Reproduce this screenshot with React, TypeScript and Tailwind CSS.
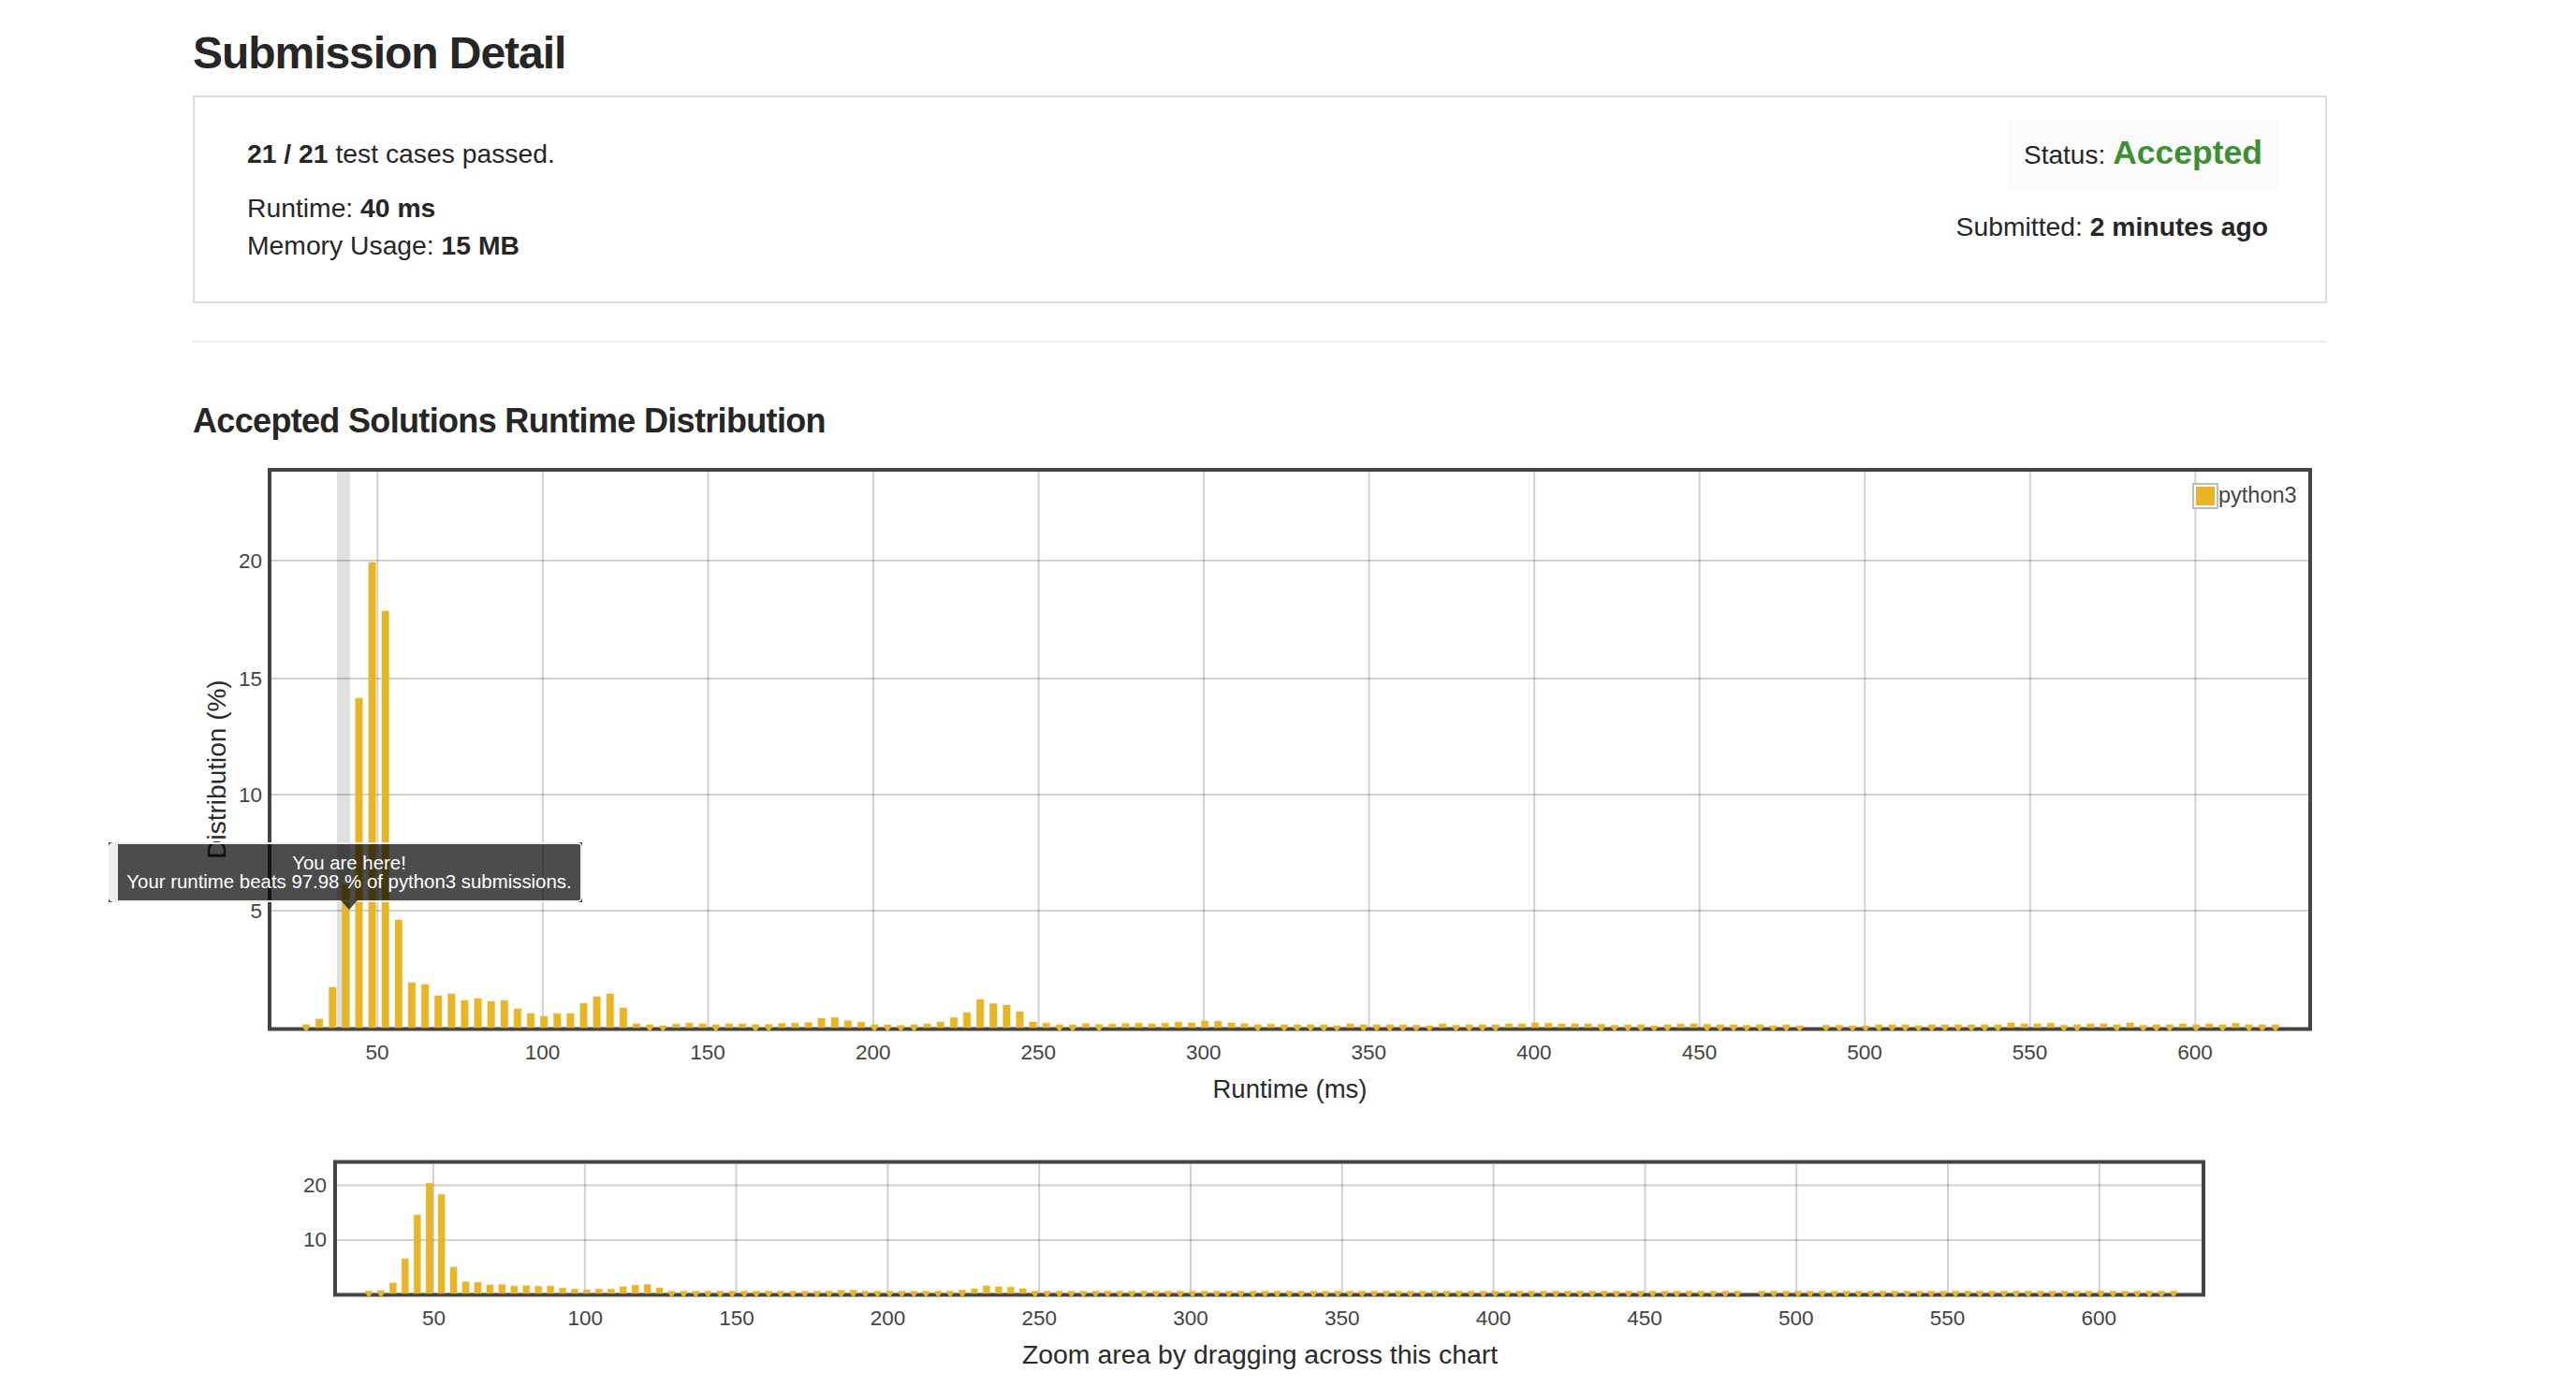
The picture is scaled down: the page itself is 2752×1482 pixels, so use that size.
import React from "react";

// bar heights in px on the big chart, one per 4ms bucket (0 = empty bucket)
const bars = [
  3, 9, 43, 153, 352, 497, 445, 115, 48, 46, 34, 36, 29, 31, 28, 29, 20, 15, 12, 15, 15, 26, 33, 36, 21, 4, 3, 2,
  3.7, 4.7, 4, 3, 4, 4, 3.3, 3.3, 4.3, 4.7, 5.3, 10, 10.7, 7.3, 5.7, 3, 3, 2.3, 3, 4, 6, 10.7, 16, 30, 25.7, 24, 17, 6,
  4.7, 3, 3, 4.3, 3.3, 3.7, 4.3, 4.7, 4, 4.7, 5.7, 5, 7, 6.7, 5, 4.3, 3, 3.7, 3, 3,
  3, 3, 2, 4, 3, 3, 3, 3, 2.5, 2, 4, 2.5, 3, 3, 3, 4, 4, 5, 4.7, 4, 4, 4, 3.5, 2.5, 3, 3, 2, 3, 3.7, 4, 3.5, 3, 3, 2.5,
  3, 2, 3, 2, 0, 2.5, 2.5, 2, 2, 3, 3, 3, 2, 3, 3, 3, 3, 3, 3, 5, 4, 4, 4.7, 2.5, 3, 4, 4, 3, 5, 2.5, 3, 3, 4, 3, 4, 3,
  4.7, 3, 3, 3,
];

const xTicks = [50, 100, 150, 200, 250, 300, 350, 400, 450, 500, 550, 600];
const gold = "#e7b526";

function Bar({ x, base, h, w }: { x: number; base: number; h: number; w: number }) {
  if (h <= 0) return null;
  return (
    <g>
      <rect
        x={x - w / 2}
        y={base - h}
        width={w}
        height={h}
        fill={gold}
        stroke="#e7b526"
        strokeOpacity={0.35}
        strokeWidth={1.5}
      />
      {h < 3.6 && (
        <polygon
          points={`${x - 3},${base} ${x + 3},${base} ${x + 1.5},${base + 3} ${x - 1.5},${base + 3}`}
          fill={gold}
        />
      )}
    </g>
  );
}

function MainChart() {
  const yTicks = [
    { v: 20, y: 599 },
    { v: 15, y: 725 },
    { v: 10, y: 849 },
    { v: 5, y: 973 },
  ];
  return (
    <svg viewBox="206 490 2280 700" className="block w-[2280px] h-[700px]">
      <rect x={360} y={504} width={14} height={594} fill="#e0e0e0" />
      {xTicks.map((t, i) => (
        <line key={t} x1={403.3 + i * 176.55} x2={403.3 + i * 176.55} y1={504} y2={1098} stroke="#000" strokeOpacity={0.18} strokeWidth={2} />
      ))}
      {yTicks.map((t) => (
        <line key={t.v} x1={290} x2={2466} y1={t.y} y2={t.y} stroke="#000" strokeOpacity={0.18} strokeWidth={2} />
      ))}
      <rect x={288} y={502} width={2180} height={597.5} fill="none" stroke="#444" strokeWidth={4} />
      {bars.map((h, i) => (
        <Bar key={i} x={327 + i * 14.12} base={1098} h={h} w={7.5} />
      ))}
      {yTicks.map((t) => (
        <text key={t.v} x={280} y={t.y + 8} textAnchor="end" className="text-[22.5px] fill-[#444]">
          {t.v}
        </text>
      ))}
      {xTicks.map((t, i) => (
        <text key={t} x={403 + i * 176.55} y={1132} textAnchor="middle" className="text-[22.5px] fill-[#444]">
          {t}
        </text>
      ))}
      <text x={1378} y={1173} textAnchor="middle" className="text-[27.5px] fill-[#2a2a2a]">
        Runtime (ms)
      </text>
      <text transform="translate(241 822) rotate(-90)" textAnchor="middle" className="text-[28px] fill-[#2a2a2a]">
        Distribution (%)
      </text>
      {/* legend */}
      <rect x={2343} y={517} width={26} height={26} fill="#fff" stroke="#bbb" strokeWidth={2} />
      <rect x={2346} y={520} width={20} height={20} fill={gold} />
      <text x={2370} y={537} className="text-[23.5px] fill-[#444]">
        python3
      </text>
    </svg>
  );
}

function MiniChart() {
  return (
    <svg viewBox="206 1230 2280 240" className="block w-[2280px] h-[240px] mt-[40px]">
      {xTicks.map((t, i) => (
        <line key={t} x1={463 + i * 161.8} x2={463 + i * 161.8} y1={1244} y2={1382} stroke="#000" strokeOpacity={0.18} strokeWidth={2} />
      ))}
      {[1266.5, 1325].map((y) => (
        <line key={y} x1={360} x2={2352} y1={y} y2={y} stroke="#000" strokeOpacity={0.18} strokeWidth={2} />
      ))}
      <rect x={358} y={1241.5} width={1996} height={142} fill="none" stroke="#444" strokeWidth={4} />
      {bars.map((h, i) => (
        <Bar key={i} x={394 + i * 12.94} base={1382} h={h > 0 ? Math.max(2.4, h * 0.235 + (h > 8 ? 1 : 0)) : 0} w={7} />
      ))}
      <text x={349} y={1274} textAnchor="end" className="text-[22.5px] fill-[#444]">
        20
      </text>
      <text x={349} y={1332} textAnchor="end" className="text-[22.5px] fill-[#444]">
        10
      </text>
      {xTicks.map((t, i) => (
        <text key={t} x={463.5 + i * 161.7} y={1416} textAnchor="middle" className="text-[22.5px] fill-[#444]">
          {t}
        </text>
      ))}
      <text x={1346} y={1456.5} textAnchor="middle" className="text-[28.4px] fill-[#2a2a2a]">
        Zoom area by dragging across this chart
      </text>
    </svg>
  );
}

function Tooltip() {
  return (
    <div className="absolute left-[-90px] top-[410px] w-[506px] h-[64px]">
      <div className="absolute left-0 top-0 w-[4px] h-[4px] bg-[#444]" />
      <div className="absolute right-0 top-0 w-[4px] h-[4px] bg-[#444]" />
      <div className="absolute left-0 bottom-0 w-[4px] h-[4px] bg-[#444]" />
      <div className="absolute right-0 bottom-0 w-[4px] h-[4px] bg-[#444]" />
      <div className="relative h-full flex flex-col items-center justify-center border-y-2 border-r-2 border-l-[10px] border-[#eeeeee] rounded-[5px] bg-black/70 bg-clip-padding text-white text-[20.4px] leading-[20px]">
        <span>You are here!</span>
        <span>Your runtime beats 97.98 % of python3 submissions.</span>
      </div>
      <div className="absolute left-[248px] top-[62px] w-0 h-0 border-x-[9px] border-t-[10px] border-x-transparent border-t-black/70" />
    </div>
  );
}

export default function App() {
  return (
    <div className="min-h-screen bg-white text-[#262626] font-['Liberation_Sans',Arial,sans-serif] pt-[27px] pl-[206px]">
      <div className="w-[2280px]">
        <h1 className="text-[48px] leading-[60px] font-bold tracking-[-1.05px] mb-[15px]">Submission Detail</h1>

        {/* result card */}
        <div className="flex justify-between border-2 border-[#dddddd] text-[28.3px] leading-[40px] pl-[56px] pr-[50px] pt-[24px] pb-[40px]">
          <div className="pt-[16px]">
            <p className="mb-[18px]">
              <b>21 / 21</b> test cases passed.
            </p>
            <p>
              Runtime: <b>40 ms</b>
            </p>
            <p>
              Memory Usage: <b>15 MB</b>
            </p>
          </div>
          <div className="flex flex-col items-end">
            <div className="flex items-baseline gap-[8px] h-[74px] bg-[#fbfbfb] px-[17px] pt-[11px]">
              <span className="text-[28px]">Status:</span>
              <span className="text-[35.5px] leading-[48px] font-bold text-[#3c8f33]">Accepted</span>
            </div>
            <div className="mt-[20px] pr-[11px]">
              Submitted: <b>2 minutes ago</b>
            </div>
          </div>
        </div>

        <hr className="mt-[40px] border-0 h-[2px] bg-[#eeeeee]" />

        <h2 className="mt-[62px] mb-[18px] text-[36px] leading-[44px] font-bold tracking-[-0.67px]">
          Accepted Solutions Runtime Distribution
        </h2>

        <div className="relative">
          <MainChart />
          <Tooltip />
        </div>
        <MiniChart />
      </div>
    </div>
  );
}
